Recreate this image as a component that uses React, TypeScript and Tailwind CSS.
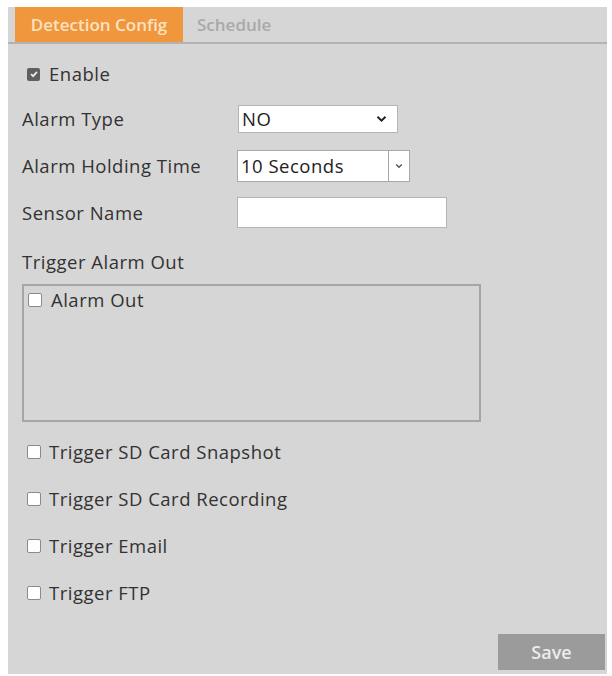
import React from "react";

const font = { fontFamily: '"Open Sans", "Noto Sans", sans-serif' };

function Box({ checked = false }: { checked?: boolean }) {
  return checked ? (
    <span className="inline-flex h-[13px] w-[13px] shrink-0 items-center justify-center rounded-[2px] bg-[#5f5f5f]">
      <svg width="10" height="10" viewBox="0 0 10 10">
        <path d="M2 5.2 L4.1 7.2 L8 2.8" fill="none" stroke="#e8e8e8" strokeWidth="1.8" />
      </svg>
    </span>
  ) : (
    <span className="inline-block h-[14px] w-[14px] shrink-0 rounded-[2px] border border-[#8a8a8a] bg-white" />
  );
}

function Chevron() {
  return (
    <svg width="11" height="8" viewBox="0 0 11 8">
      <path d="M1.5 1.8 L5.5 5.6 L9.5 1.8" fill="none" stroke="#222" strokeWidth="2" />
    </svg>
  );
}

function CheckRow({ label }: { label: string }) {
  return (
    <div className="flex h-[22px] items-center gap-[8px] pl-[5px]">
      <Box />
      <span>{label}</span>
    </div>
  );
}

export default function App() {
  return (
    <div
      className="h-[676px] w-[612px] bg-white pl-[8px] pt-[7px] text-[18.5px] tracking-[0.5px] text-[#323232]"
      style={font}
    >
      <div className="flex h-[667px] w-[599px] flex-col bg-[#d6d6d6]">
        {/* tab strip */}
        <div className="flex h-[37px] items-stretch border-b-2 border-[#b3b3b3] pl-[7px] tracking-normal">
          <div className="flex w-[168px] items-center justify-center bg-[#f0963c] text-[17px] font-semibold text-[#fde2c2]">
            Detection Config
          </div>
          <div className="flex items-center pl-[14px] text-[17px] font-semibold text-[#a9a9a9]">Schedule</div>
        </div>

        {/* form body */}
        <div className="flex flex-1 flex-col pl-[14px] pt-[19px]">
          <div className="flex h-[22px] items-center gap-[9px] pl-[5px]">
            <Box checked />
            <span>Enable</span>
          </div>

          <div className="mt-[20px] flex h-[28px] items-center">
            <span className="w-[216px]">Alarm Type</span>
            <div className="flex h-[28px] w-[160px] items-center justify-between border border-[#b5b5b5] bg-white pl-[3px] pr-[10px] text-[#222]">
              <span>NO</span>
              <Chevron />
            </div>
          </div>

          <div className="mt-[17px] flex h-[32px] items-center">
            <span className="w-[215px]">Alarm Holding Time</span>
            <div className="flex h-[32px] w-[173px] items-stretch border border-[#a9a9a9] bg-white text-[#222]">
              <span className="flex flex-1 items-center pl-[3px]">10 Seconds</span>
              <span className="flex w-[21px] items-center justify-center border-l border-[#a9a9a9]">
                <svg width="8" height="6" viewBox="0 0 8 6">
                  <path d="M1.2 1.5 L4 4.3 L6.8 1.5" fill="none" stroke="#555" strokeWidth="1.4" />
                </svg>
              </span>
            </div>
          </div>

          <div className="mt-[15px] flex h-[31px] items-center">
            <span className="w-[215px]">Sensor Name</span>
            <div className="h-[31px] w-[210px] border border-[#b5b5b5] bg-white" />
          </div>

          <div className="mt-[22px] flex h-[24px] items-center">Trigger Alarm Out</div>

          <div className="mt-[10px] h-[138px] w-[459px] border-2 border-[#a6a6a6] pt-[3px]">
            <div className="flex h-[22px] items-center gap-[9px] pl-[4px]">
              <Box />
              <span>Alarm Out</span>
            </div>
          </div>

          <div className="mt-[19px] flex flex-col gap-[25px]">
            <CheckRow label="Trigger SD Card Snapshot" />
            <CheckRow label="Trigger SD Card Recording" />
            <CheckRow label="Trigger Email" />
            <CheckRow label="Trigger FTP" />
          </div>

          <div className="mt-auto mb-[4px] flex justify-end pr-[2px]">
            <div className="flex h-[36px] w-[107px] items-center justify-center bg-[#9b9b9b] text-[18px] font-semibold tracking-normal text-[#ececec]">
              Save
            </div>
          </div>
        </div>
      </div>
    </div>
  );
}
